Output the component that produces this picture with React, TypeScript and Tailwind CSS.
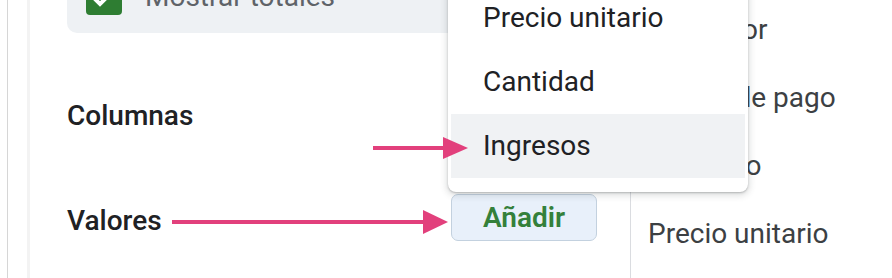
import React from 'react';

const MENU_ITEMS = ['Precio unitario', 'Cantidad', 'Ingresos'];
const FIELDS = ['Vendedor', 'Forma de pago', 'Producto', 'Precio unitario'];

function Checkbox() {
  return (
    <div className="w-[36px] h-[36px] shrink-0 rounded-[4px] bg-[#2e7d32] flex items-center justify-center">
      <svg width="36" height="36" viewBox="0 0 36 36" fill="none">
        <path d="M8 19 L14 25 L28 11" stroke="#fff" strokeWidth="4" strokeLinecap="square" />
      </svg>
    </div>
  );
}

function Arrows() {
  // annotation arrows drawn over the panel
  const pink = '#e2407c';
  return (
    <svg className="absolute inset-0 pointer-events-none" width="892" height="278" viewBox="0 0 892 278">
      <line x1="373" y1="148" x2="446" y2="148" stroke={pink} strokeWidth="4" />
      <polygon points="443,137 468,148 443,159" fill={pink} />
      <line x1="172" y1="222" x2="426" y2="222" stroke={pink} strokeWidth="4" />
      <polygon points="423,210 448,222 423,234" fill={pink} />
    </svg>
  );
}

export default function App() {
  return (
    <div className="relative w-[892px] h-[278px] overflow-hidden bg-white flex font-['Roboto',sans-serif]">
      <div className="w-[7px] shrink-0" />
      <div className="w-px shrink-0 bg-[#d6d6d6]" />
      <div className="w-[19px] shrink-0" />
      <div className="w-[3px] shrink-0 bg-[#f3f3f3]" />

      {/* left editor panel */}
      <div className="w-[600px] shrink-0 flex flex-col pl-[37px] pr-[33px]">
        <div className="-mt-[39px] rounded-[10px] bg-[#eef1f4] pl-[19px] py-[18px] flex items-center gap-[23px]">
          <Checkbox />
          <span className="text-[28px] leading-none text-[#5f6368]">Mostrar totales</span>
        </div>

        <div className="mt-[51px] h-[64px] flex items-center">
          <span className="text-[28px] leading-none font-medium text-[#202124]">Columnas</span>
        </div>

        <div className="mt-[41px] h-[64px] flex items-center justify-between">
          <span className="text-[28px] leading-none font-medium text-[#202124]">Valores</span>
          <button
            type="button"
            className="-mt-[7px] w-[146px] h-[47px] rounded-[7px] border border-[#c3d1df] bg-[#e8f0fa] text-[28px] leading-none font-semibold text-[#34803a]"
          >
            Añadir
          </button>
        </div>
      </div>

      <div className="w-px shrink-0 bg-[#dadce0]" />

      {/* field list */}
      <div className="flex-1 flex flex-col pl-[17px] -mt-[4px]">
        {FIELDS.map((f) => (
          <div key={f} className="h-[68px] shrink-0 flex items-center">
            <span className="text-[28px] leading-none text-[#3c4043] whitespace-nowrap">{f}</span>
          </div>
        ))}
      </div>

      {/* open dropdown */}
      <div className="absolute left-[448px] top-[-28px] w-[300px] bg-white rounded-[8px] py-[14px] px-[3px] shadow-[0_2px_6px_2px_rgba(60,64,67,0.15),0_1px_2px_rgba(60,64,67,0.3)]">
        {MENU_ITEMS.map((item) => (
          <div
            key={item}
            className={`h-[64px] flex items-center pl-[32px] text-[28px] leading-none text-[#202124] ${
              item === 'Ingresos' ? 'bg-[#f0f2f4]' : ''
            }`}
          >
            {item}
          </div>
        ))}
      </div>

      <Arrows />
    </div>
  );
}
